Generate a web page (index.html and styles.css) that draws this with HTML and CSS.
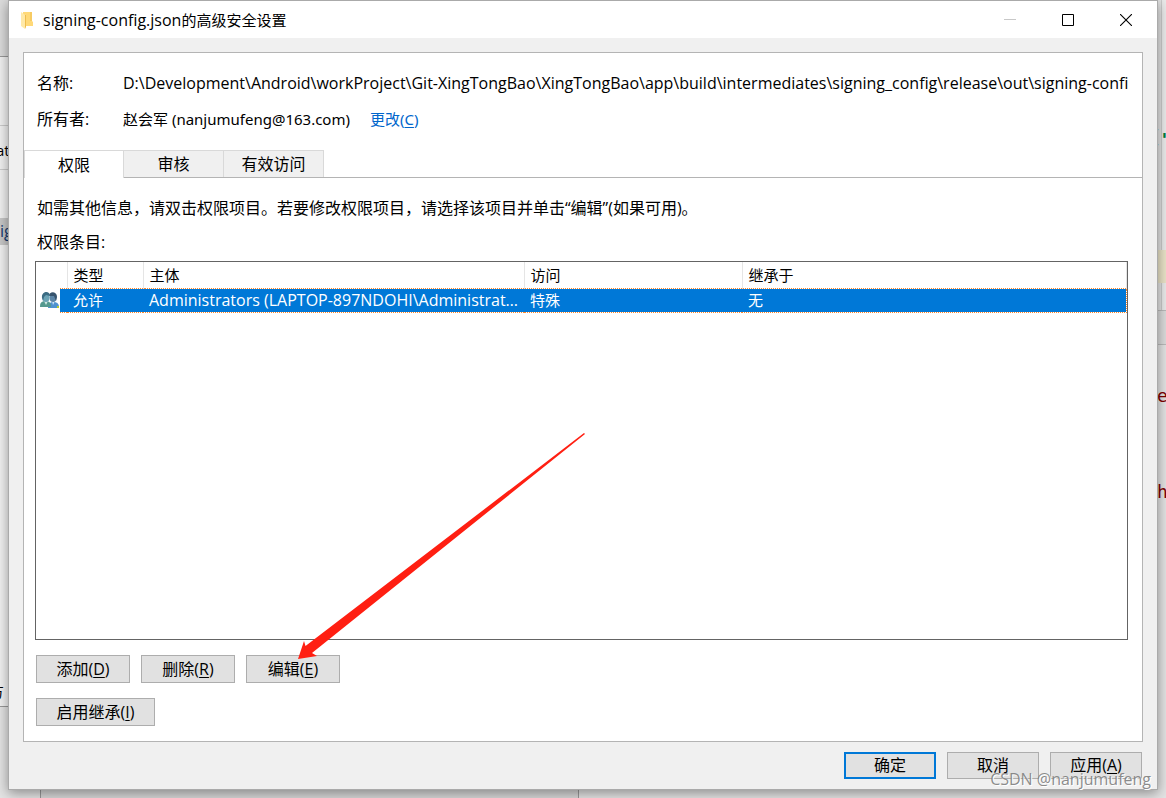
FILE: index.html
```html
<!DOCTYPE html>
<html lang="zh-CN">
<head>
<meta charset="utf-8">
<title>signing-config.json的高级安全设置</title>
<link rel="stylesheet" href="styles.css">
</head>
<body>
<div class="desktop" aria-hidden="true">
  <div class="back-left"></div>
  <div class="back-left-top"></div>
  <div class="back-left-row"></div>
  <span class="frag frag-at">at</span>
  <span class="frag frag-ig">ig</span>
  <span class="frag frag-fang">方</span>
  <div class="back-bottom"></div>
  <div class="back-right"></div>
  <div class="back-highlight"></div>
  <div class="back-band"></div>
  <span class="frag frag-brace">{</span>
  <span class="frag frag-quote">'</span>
  <span class="frag frag-e">e</span>
  <span class="frag frag-h">h</span>
</div>
<main class="dialog">
  <header class="titlebar">
    <svg class="folder" width="14" height="18" viewBox="0 0 14 18"><path d="M2 1h9v9l1 1v4H2z" fill="#ffd978"/><path d="M9 1h2v9H9z" fill="#f7cb63"/><path d="M0 1l4 3v14l-4-3z" fill="#ffe9a8"/><path d="M4 4v14l1-2V4z" fill="#eebd4e"/></svg>
    <h1 class="title"><span class="latin">signing-config.json</span>的高级安全设置</h1>
    <div class="window-controls">
      <button class="winbtn" aria-label="最小化" disabled><svg width="12" height="12"><path d="M0 5.500h12" stroke="#c8c8c8"/></svg></button>
      <button class="winbtn" aria-label="最大化"><svg width="12" height="12"><path d="M.5.5h11v11H.5z" fill="none" stroke="#000"/></svg></button>
      <button class="winbtn" aria-label="关闭"><svg width="12" height="12"><path d="M0 0l12 12M12 0L0 12" stroke="#000" stroke-width="1.100"/></svg></button>
    </div>
  </header>
  <section class="panel">
    <dl class="info">
      <dt>名称:</dt>
      <dd class="latin">D:\Development\Android\workProject\Git-XingTongBao\XingTongBao\app\build\intermediates\signing_config\release\out\signing-config.json</dd>
      <dt>所有者:</dt>
      <dd>赵会军 (nanjumufeng@163.com)<a class="change" href="#">更改(<u>C</u>)</a></dd>
    </dl>
    <div class="tabs" role="tablist">
      <button class="tab active" role="tab" aria-selected="true">权限</button>
      <button class="tab" role="tab" aria-selected="false">审核</button>
      <button class="tab" role="tab" aria-selected="false">有效访问</button>
    </div>
    <div class="tab-body">
      <p class="hint">如需其他信息，请双击权限项目。若要修改权限项目，请选择该项目并单击“编辑”(如果可用)。</p>
      <p class="caption" id="entries">权限条目:</p>
      <div class="list">
        <table class="entries" aria-labelledby="entries">
          <colgroup><col class="c-icon"><col class="c-gap"><col class="c-type"><col class="c-name"><col class="c-access"><col></colgroup>
          <thead><tr><th colspan="2"></th><th>类型</th><th>主体</th><th>访问</th><th>继承于</th></tr></thead>
          <tbody><tr>
            <td class="icon-cell"><svg class="users" width="20" height="17" viewBox="0 0 20 17"><path d="M8 16c0-4 1-5 4-6h3c3 1 4 2 4 6z" fill="#4f92d0"/><path d="M12 9l1 4 2-4z" fill="#cfe6f5"/><ellipse cx="13" cy="5.500" rx="3.500" ry="4.500" fill="#5c86a8"/><path d="M9 4c0-5 8-5 8 1l-1 4-2-5z" fill="#37546e"/><path d="M0 15c0-4 1-5 4-6h3c3 1 4 2 4 6z" fill="#55998f"/><path d="M4 9l2 4 2-4z" fill="#cee9e4"/><ellipse cx="6" cy="5.500" rx="3.500" ry="4.500" fill="#6ba3b5"/><path d="M2 6c-1-7 8-8 8-2L6 3 4 5l-1 4z" fill="#3c6c83"/><path d="M17 14h2v2h-2z" fill="#b9cc2e"/></svg></td>
            <td></td><td>允许</td><td class="latin">Administrators (LAPTOP-897NDOHI\Administrators)</td><td>特殊</td><td>无</td>
          </tr></tbody>
        </table>
      </div>
      <div class="actions">
        <button class="btn">添加(<u>D</u>)</button>
        <button class="btn">删除(<u>R</u>)</button>
        <button class="btn">编辑(<u>E</u>)</button>
      </div>
      <div class="actions">
        <button class="btn wide">启用继承(<u>I</u>)</button>
      </div>
    </div>
  </section>
  <footer class="footer">
    <button class="btn primary">确定</button>
    <button class="btn">取消</button>
    <button class="btn">应用(<u>A</u>)</button>
  </footer>
</main>
<svg class="arrow" width="290" height="230" viewBox="0 0 290 230" aria-hidden="true"><path d="M286 0l1 1L14 220l5 3L0 226l6-18 1.500 5z" fill="#ff1f12"/></svg>
<div class="watermark">CSDN @nanjumufeng</div>
</body>
</html>
```
FILE: styles.css
```css
* { box-sizing: border-box; }
body {
  margin: 0;
  height: 100vh;
  padding: 0 8px 8px;
  overflow: hidden;
  display: flex;
  position: relative;
  background: #e4e4e4;
  color: #000;
  font: 16px/24px "Open Sans", "Noto Sans CJK SC", sans-serif;
}
h1, p, dl, dd { margin: 0; }
button { font: inherit; color: inherit; padding: 0; }
u { text-underline-offset: 2px; }

.desktop { position: absolute; inset: 0; overflow: hidden; }
.desktop > * { position: absolute; }
.back-left { left: 0; top: 0; width: 40px; height: 707px; background: #f2f2f2; border-bottom: 1px solid #999; }
.back-left-top { left: 0; top: 0; width: 40px; height: 57px; background: #dcdcdc; border-bottom: 1px solid #999; }
.back-left-row { left: 0; top: 125px; width: 40px; height: 45px; border: solid #ccc; border-width: 1px 0; }
.back-bottom { left: 40px; top: 780px; width: 539px; height: 18px; background: #d8d8d8; border: solid #999; border-width: 0 1px; }
.back-right { right: 0; top: 0; width: 5px; height: 310px; background: #ebebeb; border-left: 1px solid #ccc; }
.back-highlight { right: 0; top: 250px; width: 20px; height: 33px; background: #ebe4c8; }
.back-band { right: 0; top: 310px; width: 20px; height: 35px; background: #dcdcdc; border: solid #bbb; border-width: 1px 0; }
.frag-at { left: -4px; top: 138px; font-size: 15px; }
.frag-ig { left: 0; top: 218px; width: 20px; background: #c8c8c8; color: #123a70; line-height: 27px; }
.frag-fang { left: -11px; top: 679px; font-size: 15px; }
.frag-brace { left: 1149px; top: 125px; color: #17406a; font: 18px/24px "DejaVu Sans Mono", monospace; }
.frag-quote { left: 1159px; top: 128px; color: #008040; font: bold 18px/24px "DejaVu Sans Mono", monospace; }
.frag-e, .frag-h { left: 1157px; color: #800000; font: 18px/24px "DejaVu Sans Mono", monospace; }
.frag-e { top: 384px; }
.frag-h { top: 480px; }

.dialog {
  position: relative;
  flex: 1;
  min-width: 0;
  display: flex;
  flex-direction: column;
  background: #f0f0f0;
  border: 1px solid #aaa;
  box-shadow: 0 3px 12px rgba(0, 0, 0, .4);
}
.titlebar { display: flex; align-items: center; height: 37px; padding: 0 2px 0 12px; background: #fff; }
.title { flex: 1; margin-left: 8px; font-size: 15px; line-height: 22px; font-weight: 400; }
.latin { font-size: 16px; }
.window-controls { display: flex; }
.winbtn { width: 58px; height: 36px; border: 0; background: none; display: grid; place-items: center; }

.panel {
  flex: 1;
  display: flex;
  flex-direction: column;
  margin: 14px 14px 0;
  background: #fff;
  border: 1px solid #b4b4b4;
}
.info { display: grid; grid-template-columns: 86px minmax(0, 1fr); row-gap: 12px; padding: 18px 14px 0 13px; }
.info dd { white-space: nowrap; overflow: hidden; }
.info dd:not(.latin) { font-family: "Noto Sans", "Noto Sans CJK SC", sans-serif; font-size: 15px; }
.change { margin-left: 20px; color: #0066cc; text-decoration: none; }
.tabs { display: flex; margin-top: 19px; border-bottom: 1px solid #b4b4b4; }
.tab { width: 100px; height: 27px; line-height: 24px; background: #f0f0f0; border: 1px solid #d9d9d9; border-width: 1px 1px 0 0; }
.tab.active { height: 28px; margin-bottom: -1px; background: #fff; border-left-width: 1px; }
.tab-body { flex: 1; display: flex; flex-direction: column; padding: 18px 14px 15px 11px; }
.hint { padding-left: 2px; }
.caption { margin: 10px 0 7px; padding-left: 2px; }
.list { flex: 1; border: 1px solid #646464; margin-bottom: 15px; }
.entries { width: 100%; table-layout: fixed; border-collapse: collapse; font-size: 15px; }
.c-icon { width: 24px; }
.c-gap { width: 7px; }
.c-type { width: 76px; }
.c-name { width: 381px; }
.c-access { width: 218px; }
.entries th { height: 26px; padding: 0 6px; text-align: left; font-weight: 400; border-right: 1px solid #e5e5e5; }
.entries td { height: 24px; padding: 0 4px 0 6px; white-space: nowrap; overflow: hidden; text-overflow: ellipsis; line-height: 22px; background: #0078d7; color: #fff; border: dotted #ff8728; border-width: 1px 0; }
.entries td:last-child { border-right-width: 1px; }
.entries .icon-cell { padding: 0 0 0 4px; background: #fff; border: 0; }
.users { display: block; }

.actions { display: flex; gap: 11px; padding-left: 1px; }
.actions + .actions { margin-top: 15px; }
.btn { width: 94px; height: 28px; line-height: 24px; border: 1px solid #adadad; background: #e1e1e1; }
.btn.wide { width: 119px; }
.footer { display: flex; justify-content: flex-end; gap: 11px; padding: 10px 15px; }
.footer .btn { width: 92px; height: 27px; line-height: 23px; }
.footer .primary { border: 2px solid #0078d7; }

.arrow { position: absolute; left: 298px; top: 433px; pointer-events: none; }
.watermark {
  position: absolute;
  right: 15px;
  bottom: 7px;
  color: rgba(120, 120, 120, .85);
  text-shadow: 1px 1px 0 #fff;
  pointer-events: none;
}
```
